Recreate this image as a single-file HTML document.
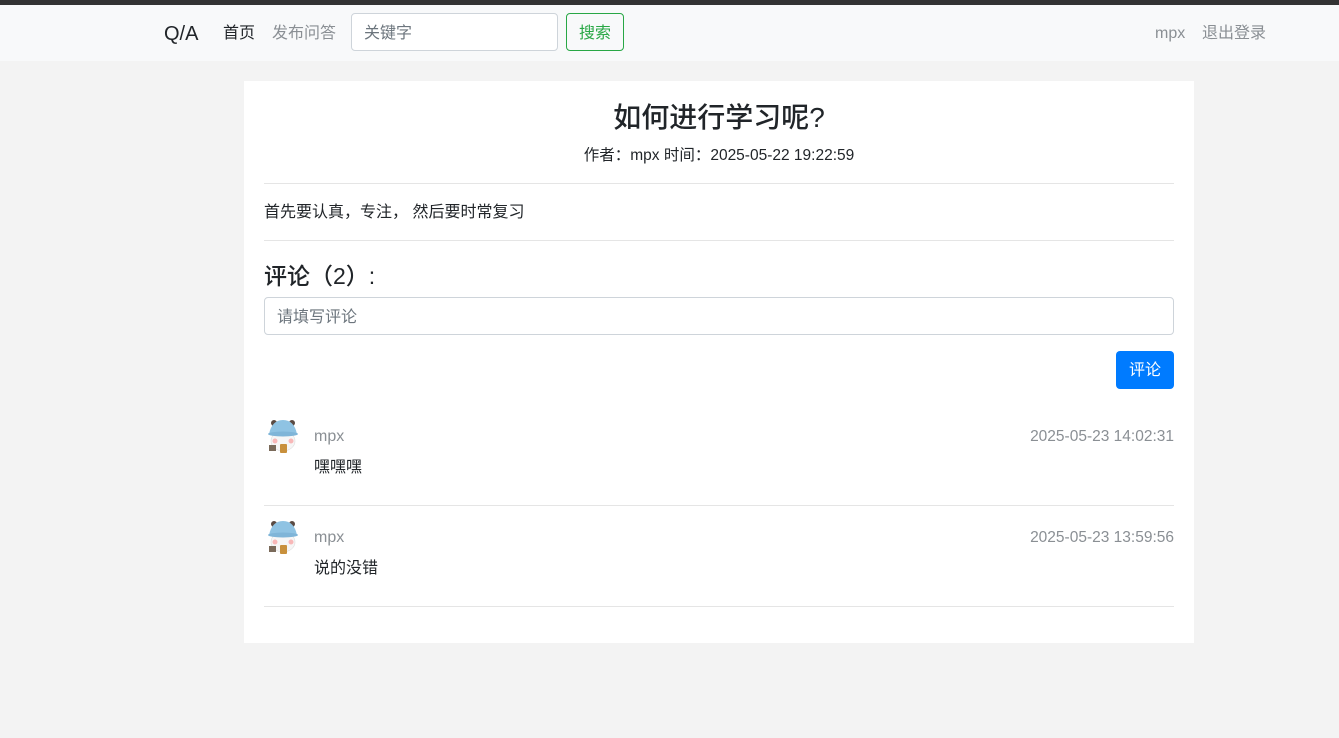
<!DOCTYPE html>
<html><head><meta charset="utf-8"><style>
*{box-sizing:border-box;margin:0;padding:0}
body{width:1339px;height:738px;background:#f3f3f3;font-family:"Liberation Sans","Noto Sans CJK SC",sans-serif;color:#212529;position:relative;overflow:hidden;font-size:16px}
.top{position:absolute;left:0;top:0;width:1339px;height:5px;background:#333}
.nav{position:absolute;left:0;top:5px;width:1339px;height:56px;background:#f8f9fa}
.inp{position:absolute;left:351px;top:13px;width:207px;height:38px;border:1px solid #ced4da;border-radius:4px;background:#fff;padding:0 12px;line-height:40px;color:#6c757d}
.btn{position:absolute;left:566px;top:13px;width:58px;height:38px;border:1px solid #28a745;border-radius:4px;color:#28a745;text-align:center;line-height:40px}
.card{position:absolute;left:244px;top:81px;width:950px;height:562px;background:#fff}
.hr{position:absolute;left:20px;width:910px;height:1px;background:#e5e5e5}
.t{position:absolute;white-space:nowrap}
.gray{color:#8a8f94}
</style></head><body>
<div class="top"></div>
<div class="nav"></div>
<div class="t" style="left:164px;top:21px;font-size:20px;line-height:26px">Q/A</div>
<div class="t" style="left:223px;top:24px;line-height:20px">首页</div>
<div class="t gray" style="left:272px;top:24px;line-height:20px">发布问答</div>
<div class="inp">关键字</div>
<div class="btn">搜索</div>
<div class="t gray" style="left:1155px;top:24px;line-height:20px">mpx</div>
<div class="t gray" style="left:1202px;top:24px;line-height:20px">退出登录</div>
<div class="card">
<div class="t" style="left:0;width:950px;text-align:center;top:19px;font-size:28px;line-height:36px;font-weight:500">如何进行学习呢?</div>
<div class="t" style="left:0;width:950px;text-align:center;top:65px;font-size:15.5px;line-height:20px">作者：mpx 时间：2025-05-22 19:22:59</div>
<div class="hr" style="top:102px"></div>
<div class="t" style="left:20px;top:122px;line-height:20px">首先要认真，专注， 然后要时常复习</div>
<div class="hr" style="top:159px"></div>
<div class="t" style="left:20px;top:179px;font-size:23px;line-height:32px;font-weight:500">评论（2）:</div>
<div style="position:absolute;left:20px;top:216px;width:910px;height:38px;border:1px solid #ced4da;border-radius:4px;padding:0 12px;line-height:40px;color:#6c757d">请填写评论</div>
<div style="position:absolute;left:872px;top:270px;width:58px;height:38px;background:#007bff;border-radius:4px;color:#fff;text-align:center;line-height:40px">评论</div>

<svg style="position:absolute;left:20px;top:336px" width="38" height="38" viewBox="0 0 38 38"><circle cx="19" cy="19" r="18" fill="#fff"/><circle cx="10" cy="6" r="3" fill="#5a4a42"/><circle cx="28" cy="6" r="3" fill="#5a4a42"/><ellipse cx="19" cy="24" rx="12" ry="10" fill="#f6f6f6" stroke="#ddd" stroke-width=".6"/><path d="M5 17 Q8 3 19 3 Q30 3 33 17 Z" fill="#8fc3e3"/><ellipse cx="19" cy="17" rx="15" ry="2.5" fill="#7fb5d8"/><circle cx="11" cy="24" r="2.5" fill="#f8b8b8"/><circle cx="27" cy="24" r="2.5" fill="#f8b8b8"/><rect x="16" y="27" width="7" height="9" rx="1" fill="#c8903c"/><rect x="5" y="28" width="7" height="6" fill="#7a6a5a"/></svg>
<div class="t gray" style="left:70px;top:346px;line-height:20px">mpx</div>
<div class="t gray" style="right:20px;top:346px;line-height:20px;font-size:15.5px">2025-05-23 14:02:31</div>
<div class="t" style="left:70px;top:377px;line-height:20px">嘿嘿嘿</div>
<div class="hr" style="top:424px"></div>

<svg style="position:absolute;left:20px;top:437px" width="38" height="38" viewBox="0 0 38 38"><circle cx="19" cy="19" r="18" fill="#fff"/><circle cx="10" cy="6" r="3" fill="#5a4a42"/><circle cx="28" cy="6" r="3" fill="#5a4a42"/><ellipse cx="19" cy="24" rx="12" ry="10" fill="#f6f6f6" stroke="#ddd" stroke-width=".6"/><path d="M5 17 Q8 3 19 3 Q30 3 33 17 Z" fill="#8fc3e3"/><ellipse cx="19" cy="17" rx="15" ry="2.5" fill="#7fb5d8"/><circle cx="11" cy="24" r="2.5" fill="#f8b8b8"/><circle cx="27" cy="24" r="2.5" fill="#f8b8b8"/><rect x="16" y="27" width="7" height="9" rx="1" fill="#c8903c"/><rect x="5" y="28" width="7" height="6" fill="#7a6a5a"/></svg>
<div class="t gray" style="left:70px;top:447px;line-height:20px">mpx</div>
<div class="t gray" style="right:20px;top:447px;line-height:20px;font-size:15.5px">2025-05-23 13:59:56</div>
<div class="t" style="left:70px;top:478px;line-height:20px">说的没错</div>
<div class="hr" style="top:525px"></div>
</div>
</body></html>
